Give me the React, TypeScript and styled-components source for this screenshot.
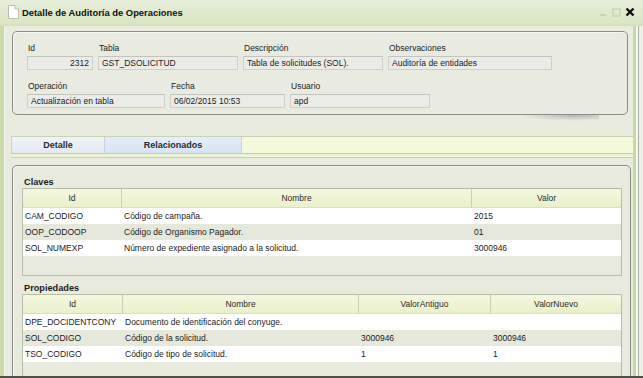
import styled, { createGlobalStyle } from "styled-components";

const GlobalStyle = createGlobalStyle`
  html, body {
    margin: 0;
    padding: 0;
  }
  body {
    font-family: "Liberation Sans", Arial, sans-serif;
    font-size: 8.5px;
    color: #1b1b1b;
    background: #e8ebde;
  }
  * { box-sizing: border-box; }
`;

interface Column {
    title: string;
}

const claveCols: Column[] = [{ title: 'Id' }, { title: 'Nombre' }, { title: 'Valor' }];
const claveRows = [
    ['CAM_CODIGO', 'Código de campaña.', '2015'],
    ['OOP_CODOOP', 'Código de Organismo Pagador.', '01'],
    ['SOL_NUMEXP', 'Número de expediente asignado a la solicitud.', '3000946'],
];

const propCols: Column[] = [{ title: 'Id' }, { title: 'Nombre' }, { title: 'ValorAntiguo' }, { title: 'ValorNuevo' }];
const propRows = [
    ['DPE_DOCIDENTCONY', 'Documento de identificación del conyuge.', '', ''],
    ['SOL_CODIGO', 'Código de la solicitud.', '3000946', '3000946'],
    ['TSO_CODIGO', 'Código de tipo de solicitud.', '1', '1'],
];

const DocIcon = () => (
    <svg width="11" height="14" viewBox="0 0 11 14">
        <path d="M0.5 0.5 H7 L10.5 4 V13.5 H0.5 Z" fill="#ffffff" stroke="#b9bfae" />
        <path d="M7 0.5 V4 H10.5" fill="#eef0ea" stroke="#b9bfae" />
    </svg>
);

const WinControls = () => (
    <Controls>
        <svg width="9" height="9" viewBox="0 0 9 9">
            <rect x="1" y="6" width="6" height="2" fill="#c9d3bb" />
        </svg>
        <svg width="9" height="9" viewBox="0 0 9 9">
            <rect x="1" y="1" width="7" height="7" fill="none" stroke="#c9d3bb" strokeWidth="1.5" />
        </svg>
        <svg width="10" height="10" viewBox="0 0 10 10">
            <path d="M1.5 1.5 L8.5 8.5 M8.5 1.5 L1.5 8.5" stroke="#111" strokeWidth="2.4" />
        </svg>
    </Controls>
);

interface FieldProps {
    label: string;
    value: string;
    width: number;
    right?: boolean;
}
const Field = ({ label, value, width, right }: FieldProps) => (
    <FieldBox $width={width}>
        <FieldLabel>{label}</FieldLabel>
        <FieldInput $right={right}>{value}</FieldInput>
    </FieldBox>
);

interface GridProps {
    title: string;
    cols: Column[];
    rows: string[][];
    template: string;
    filler: number;
}
const DataGrid = ({ title, cols, rows, template, filler }: GridProps) => (
    <>
        <SectionTitle>{title}</SectionTitle>
        <Grid>
            <GridRow $template={template}>
                {cols.map((c) => (
                    <HeaderCell key={c.title}>{c.title}</HeaderCell>
                ))}
            </GridRow>
            {rows.map((r, i) => (
                <GridRow key={i} $template={template} $alt={i % 2 === 1}>
                    {r.map((v, j) => (
                        <Cell key={j}>{v}</Cell>
                    ))}
                </GridRow>
            ))}
            <Filler $height={filler} />
        </Grid>
    </>
);

const App = () => {
    return (
        <Window>
            <GlobalStyle />
            <TitleBar>
                <DocIcon />
                <Title>Detalle de Auditoría de Operaciones</Title>
                <WinControls />
            </TitleBar>
            <Frame>
                <Main>
                    <HeaderPanel>
                        <FieldRow>
                            <Field label="Id" value="2312" width={66} right />
                            <Field label="Tabla" value="GST_DSOLICITUD" width={140} />
                            <Field label="Descripción" value="Tabla de solicitudes (SOL)." width={140} />
                            <Field label="Observaciones" value="Auditoría de entidades" width={164} />
                        </FieldRow>
                        <FieldRow>
                            <Field label="Operación" value="Actualización en tabla" width={138} />
                            <Field label="Fecha" value="06/02/2015 10:53" width={115} />
                            <Field label="Usuario" value="apd" width={140} />
                        </FieldRow>
                    </HeaderPanel>
                    <TabStrip>
                        <Tab $active $width={94}>Detalle</Tab>
                        <Tab $width={137}>Relacionados</Tab>
                    </TabStrip>
                    <TabUnderline />
                    <ContentPanel>
                        <DataGrid title="Claves" cols={claveCols} rows={claveRows} template="99px 350px 1fr" filler={19} />
                        <DataGrid title="Propiedades" cols={propCols} rows={propRows} template="100px 236px 132px 1fr" filler={30} />
                    </ContentPanel>
                </Main>
                <RightFrame />
            </Frame>
        </Window>
    );
};

export default App;

const Window = styled.div`
    width: 643px;
    height: 378px;
    overflow: hidden;
    display: flex;
    flex-direction: column;
    background: #e8ebde;
    border-bottom: 2px solid #4d4f4a;
`

const TitleBar = styled.div`
    height: 26px;
    flex: none;
    display: flex;
    align-items: center;
    padding: 0 8px 0 8px;
    background: linear-gradient(#e7eedb, #d9e5c3);
    border-bottom: 2px solid #d3e2b8;
`

const Title = styled.span`
    font-weight: bold;
    font-size: 9.4px;
    color: #111;
    margin-left: 3px;
`

const Controls = styled.div`
    margin-left: auto;
    display: flex;
    align-items: center;
    gap: 4px;
`

const Frame = styled.div`
    flex: 1;
    display: flex;
    min-height: 0;
    border-left: 4px solid #cadba9;
`

const Main = styled.div`
    flex: 1;
    display: flex;
    flex-direction: column;
    min-width: 0;
    border-left: 1px solid #f2f5ea;
`

const HeaderPanel = styled.div`
    position: relative;
    margin: 5px 5px 0 7px;
    height: 84px;
    padding: 11px 14px 0 14px;
    background: #e9ebe0;
    border: 1px solid #8a8c86;
    border-radius: 5px;
    box-shadow: inset 1px 1px 0 #f7f8f2;
    display: flex;
    flex-direction: column;
    gap: 11px;
    &::after {
        content: "";
        position: absolute;
        right: 28px;
        bottom: -7px;
        width: 80px;
        height: 6px;
        background: radial-gradient(ellipse at 70% 0%, rgba(120, 120, 120, 0.45), rgba(120, 120, 120, 0) 70%);
    }
`

const FieldRow = styled.div`
    display: flex;
    gap: 5px;
`

const FieldBox = styled.div<{ $width: number }>`
    width: ${({ $width }) => $width}px;
    display: flex;
    flex-direction: column;
    gap: 2px;
`

const FieldLabel = styled.div`
    height: 11px;
    line-height: 11px;
    padding-left: 1px;
    color: #222;
`

const FieldInput = styled.div<{ $right?: boolean }>`
    height: 14px;
    line-height: 12px;
    padding: 0 3px;
    background: #ebebe7;
    border: 1px solid #d0d0cb;
    border-top-color: #c4c4bf;
    text-align: ${({ $right }) => ($right ? 'right' : 'left')};
    color: #1b1b1b;
    white-space: nowrap;
    overflow: hidden;
`

const TabStrip = styled.div`
    margin: 21px 0 0 6px;
    height: 18px;
    flex: none;
    display: flex;
    background: #f4f9dc;
    border-top: 1px solid #c9d2b4;
    border-bottom: 1px solid #c3ccaa;
`

const Tab = styled.div<{ $active?: boolean; $width: number }>`
    width: ${({ $width }) => $width}px;
    display: flex;
    align-items: center;
    justify-content: center;
    font-weight: bold;
    font-size: 9px;
    color: #1f2a33;
    border-right: 1px solid #c7d3df;
    border-left: ${({ $active }) => ($active ? '1px solid #c7d0d8' : 'none')};
    background: ${({ $active }) =>
        $active
            ? 'linear-gradient(#f0f3f6, #e3e9ef)'
            : 'linear-gradient(#e6eef8, #d6e4f4)'};
`

const TabUnderline = styled.div`
    margin-left: 6px;
    height: 4px;
    flex: none;
    background: #eef4d6;
    border-bottom: 1px solid #c8d1b0;
`

const ContentPanel = styled.div`
    flex: 1;
    margin: 7px 2px -6px 7px;
    padding: 10px 8px 0 9px;
    background: #e8eade;
    border: 1px solid #878983;
    border-radius: 5px;
    box-shadow: inset 1px 1px 0 #f7f8f2;
    overflow: hidden;
`

const SectionTitle = styled.div`
    height: 12px;
    line-height: 12px;
    padding-left: 2px;
    font-weight: bold;
    font-size: 9.2px;
    color: #1b1b1b;
    & + div {
        margin-bottom: 6px;
    }
`

const Grid = styled.div`
    border: 1px solid #b7bea7;
    background: #e8eade;
`

const GridRow = styled.div<{ $template: string; $alt?: boolean }>`
    display: grid;
    grid-template-columns: ${({ $template }) => $template};
    background: ${({ $alt }) => ($alt ? '#e6e8dc' : '#ffffff')};
`

const HeaderCell = styled.div`
    height: 19px;
    display: flex;
    align-items: center;
    justify-content: center;
    color: #2b2b2b;
    background: linear-gradient(#f5f8e0, #e9f0c9);
    border-right: 1px solid #c9d0ae;
    border-bottom: 1px solid #d9dfc2;
    &:last-child {
        border-right: none;
    }
`

const Cell = styled.div`
    height: 16px;
    line-height: 16px;
    padding-left: 2px;
    white-space: nowrap;
    overflow: hidden;
`

const Filler = styled.div<{ $height: number }>`
    height: ${({ $height }) => $height}px;
`

const RightFrame = styled.div`
    width: 10px;
    flex: none;
    background: #eef0e6;
    border-left: 3px solid #c6da9e;
    box-shadow: inset 2px 0 0 #f6f7f0, inset 3px 0 0 #a9afa3;
`
